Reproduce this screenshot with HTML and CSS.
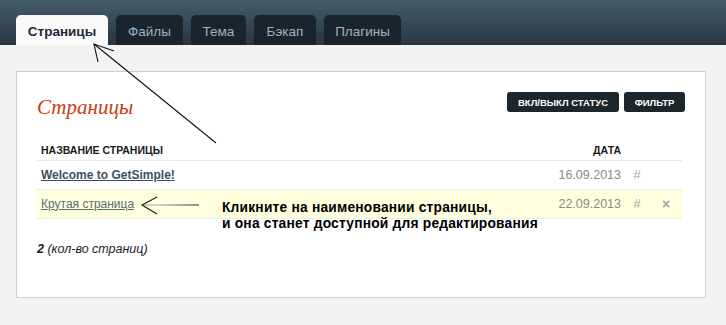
FILE: index.html
```html
<!DOCTYPE html>
<html lang="ru">
<head>
<meta charset="utf-8">
<link rel="stylesheet" href="styles.css">
</head>
<body>
<header class="header">
  <nav class="tabs">
    <a class="tab active">Страницы</a>
    <a class="tab">Файлы</a>
    <a class="tab">Тема</a>
    <a class="tab">Бэкап</a>
    <a class="tab">Плагины</a>
  </nav>
</header>
<main class="panel">
  <div class="panel-head">
    <h1 class="title">Страницы</h1>
    <div class="actions">
      <button class="btn">ВКЛ/ВЫКЛ СТАТУС</button>
      <button class="btn">ФИЛЬТР</button>
    </div>
  </div>
  <table class="pages">
    <colgroup><col class="w-name"><col class="w-date"><col class="w-hash"><col class="w-del"></colgroup>
    <thead>
      <tr><th class="c-name">НАЗВАНИЕ СТРАНИЦЫ</th><th class="c-date">ДАТА</th><th class="c-hash"></th><th class="c-del"></th></tr>
    </thead>
    <tbody>
      <tr><td class="c-name"><a class="main-link">Welcome to GetSimple!</a></td><td class="c-date">16.09.2013</td><td class="c-hash">#</td><td class="c-del"></td></tr>
      <tr class="hl"><td class="c-name"><a class="page-link">Крутая страница</a></td><td class="c-date">22.09.2013</td><td class="c-hash">#</td><td class="c-del">×</td></tr>
    </tbody>
  </table>
  <p class="count"><b>2</b> (кол-во страниц)</p>
</main>
<div class="overlay">
  <svg class="arrows" width="726" height="325" viewBox="0 0 726 325">
    <defs>
      <linearGradient id="g2" gradientUnits="userSpaceOnUse" x1="160" y1="205" x2="199" y2="205">
        <stop offset="0" stop-color="#9aa4b0"/>
        <stop offset="1" stop-color="#0e2050"/>
      </linearGradient>
    </defs>
    <g fill="none" stroke="#111" stroke-width="1.1">
      <path d="M94 44 L216 143"/>
      <path d="M98 62 L94 44 L114 51"/>
    </g>
    <g fill="none" stroke-width="1.2">
      <path d="M143 205 L199 205" stroke="url(#g2)"/>
      <path d="M157 197 L142 205 L157 214" stroke="#222"/>
    </g>
  </svg>
  <p class="note">Кликните на наименовании страницы,<br>и она станет доступной для редактирования</p>
</div>
</body>
</html>
```

FILE: styles.css
```css
* { box-sizing: border-box; }
html, body { margin: 0; padding: 0; }
body {
  background: #f3f3f3;
  font-family: "Liberation Sans", Arial, sans-serif;
  width: 726px;
  height: 325px;
  overflow: hidden;
  position: relative;
}
.header {
  height: 45px;
  background: linear-gradient(#465c69, #283640);
  display: flex;
  align-items: flex-end;
  padding-left: 16px;
}
.tabs { display: flex; gap: 8px; }
.tab {
  height: 30px;
  padding: 2px 0 0;
  display: flex;
  align-items: center;
  justify-content: center;
  background: #1b242a;
  color: #9db3c2;
  font-size: 13.5px;
  border-radius: 5px 5px 0 0;
}
.tab:nth-child(2) { width: 67px; }
.tab:nth-child(3) { width: 55px; }
.tab:nth-child(4) { width: 62px; }
.tab:nth-child(5) { width: 77px; }
.tab.active {
  width: 92px;
  background: #fafafa;
  color: #1c2a36;
  font-weight: bold;
  font-size: 13.5px;
}
.panel {
  margin: 26px 20px 0 16px;
  height: 227px;
  background: #fff;
  border: 1px solid #cfcfcf;
  padding: 20px 23px 0 20px;
}
.panel-head {
  display: flex;
  justify-content: space-between;
  align-items: flex-start;
  height: 44px;
}
.title {
  margin: 3px 0 0;
  font-family: "Liberation Serif", Georgia, serif;
  font-style: italic;
  font-weight: normal;
  font-size: 21px;
  color: #cc3c0e;
}
.actions { display: flex; gap: 5px; margin-right: -3px; }
.btn {
  height: 20px;
  padding: 0;
  border: 0;
  border-radius: 3px;
  background: #1c262d;
  color: #fff;
  font-family: "Liberation Sans", Arial, sans-serif;
  font-size: 9.5px;
  font-weight: bold;
  white-space: nowrap;
}
.btn:first-child { width: 112px; }
.btn:last-child { width: 61px; }
.pages {
  width: 645px;
  table-layout: fixed;
  border-collapse: collapse;
  font-size: 12px;
}
.w-date { width: 90px; }
.w-hash { width: 26px; }
.w-del { width: 32px; }
.pages th {
  font-size: 10.5px;
  font-weight: bold;
  color: #1a1a1a;
  text-align: left;
  height: 24px;
  padding: 5px 4px 0;
  border-bottom: 1px solid #e6e6e6;
}
.pages td {
  height: 29px;
  padding: 0 4px;
  border-bottom: 1px solid #ececec;
}
.pages .c-date { text-align: right; color: #8a8a8a; font-size: 12.5px; padding-right: 3px; }
.pages th.c-date { color: #1a1a1a; font-size: 10.5px; }
.pages .c-hash { text-align: center; color: #a5a5a5; font-size: 13px; padding: 0; }
.pages .c-del { text-align: center; color: #a3a3a3; font-size: 14px; font-weight: bold; padding: 0; }
.hl td { background: #ffffdd; }
.main-link {
  color: #3c5060;
  font-weight: bold;
  text-decoration: underline;
}
.page-link {
  color: #5a6d7c;
  text-decoration: underline;
}
.count {
  margin: 23px 0 0;
  font-size: 12.5px;
  font-style: italic;
  color: #1a1a2a;
}
.overlay {
  position: absolute;
  left: 0;
  top: 0;
  width: 726px;
  height: 325px;
  pointer-events: none;
}
.arrows { position: absolute; left: 0; top: 0; }
.note {
  position: absolute;
  left: 222px;
  top: 200px;
  margin: 0;
  font-size: 13.8px;
  font-weight: bold;
  line-height: 16px;
  color: #000;
  letter-spacing: 0.2px;
}
```
